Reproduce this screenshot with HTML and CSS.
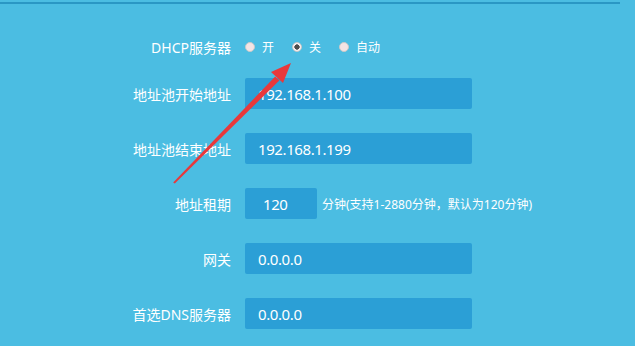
FILE: index.html
```html
<!DOCTYPE html>
<html>
<head>
<meta charset="utf-8">
<title>DHCP服务器</title>
<link rel="stylesheet" href="styles.css">
</head>
<body>
<div class="topline"></div>
<form class="dhcp" action="#" method="get">
  <div class="row row_radio">
    <label class="label">DHCP服务器</label>
    <div class="radios">
      <label class="opt"><input type="radio" name="dhcp" value="on"> 开</label>
      <label class="opt"><input type="radio" name="dhcp" value="off" checked> 关</label>
      <label class="opt"><input type="radio" name="dhcp" value="auto"> 自动</label>
    </div>
  </div>
  <div class="row">
    <label class="label">地址池开始地址</label>
    <input class="field" type="text" value="192.168.1.100">
  </div>
  <div class="row">
    <label class="label">地址池结束地址</label>
    <input class="field" type="text" value="192.168.1.199">
  </div>
  <div class="row">
    <label class="label">地址租期</label>
    <input class="field short" type="text" value="120">
    <span class="hint">分钟(支持1-2880分钟，默认为120分钟)</span>
  </div>
  <div class="row">
    <label class="label">网关</label>
    <input class="field" type="text" value="0.0.0.0">
  </div>
  <div class="row">
    <label class="label">首选DNS服务器</label>
    <input class="field" type="text" value="0.0.0.0">
  </div>
</form>
<svg class="arrow" width="635" height="346" viewBox="0 0 635 346">
  <polygon points="173.2,182.4 174.8,183.6 279.3,80.6 275.2,76.6" fill="#e8383b"/>
  <polygon points="291,63 283,83 271,72" fill="#e8383b"/>
</svg>
</body>
</html>
```

FILE: styles.css
```css
body {
    margin: 0;
    background-color: #4bbde2;
    font-family: "Noto Sans", "Noto Sans CJK SC", sans-serif;
    color: #ffffff;
    overflow: hidden;
}
.topline {
    width: 620px;
    height: 2px;
    margin-top: 2px;
    background-color: #2a97c4;
}
.dhcp {
    display: flex;
    flex-direction: column;
    padding-top: 32px;
}
.row {
    display: flex;
    align-items: center;
    height: 31px;
    margin-bottom: 24px;
}
.row_radio {
    height: 22px;
    margin-bottom: 20px;
}
.label {
    width: 231px;
    padding-right: 14px;
    text-align: right;
    font-size: 14px;
    white-space: nowrap;
}
.radios {
    display: flex;
}
.opt {
    display: flex;
    align-items: center;
    font-size: 12px;
    margin-right: 18px;
}
.opt input {
    appearance: none;
    -webkit-appearance: none;
    width: 10px;
    height: 10px;
    margin: 0 7px 0 0;
    border: 1px solid #c9c9c9;
    border-radius: 50%;
    background-color: #f4e4e4;
    box-sizing: border-box;
}
.opt input:checked {
    background: radial-gradient(circle, #4d4d4d 0 2.4px, #f7f0f0 2.9px);
}
.field {
    width: 227px;
    height: 31px;
    box-sizing: border-box;
    padding: 0 0 0 13px;
    border: none;
    border-radius: 2px;
    background-color: #2b9fd6;
    color: #ffffff;
    font-family: "Noto Sans", sans-serif;
    font-size: 15px;
    letter-spacing: -0.4px;
    outline: none;
}
.field.short {
    width: 72px;
    padding-left: 18px;
}
.hint {
    margin-left: 5px;
    font-size: 12px;
}
.arrow {
    position: absolute;
    left: 0;
    top: 0;
    pointer-events: none;
}
```
